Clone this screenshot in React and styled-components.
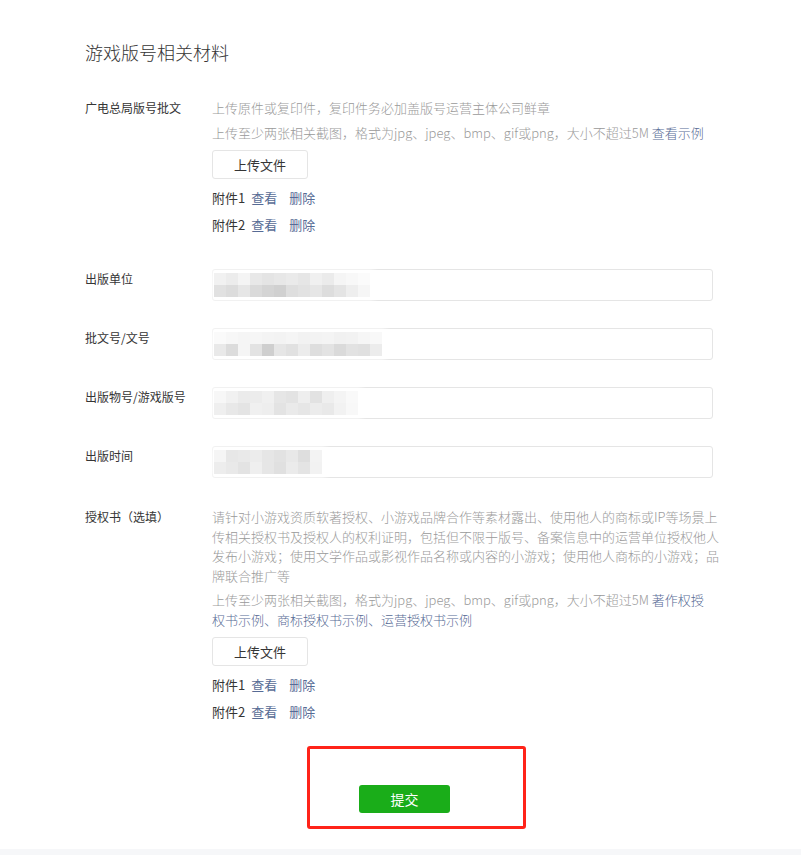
import React from 'react'
import styled, { createGlobalStyle } from 'styled-components'

const GlobalStyle = createGlobalStyle`
  body {
    margin: 0;
    background: #f6f7f9;
    font-family: "Noto Sans CJK SC", "Microsoft YaHei", sans-serif;
    font-weight: 300;
  }
`

const Card = styled.div`
  background: #fff;
  padding: 39px 0 36px 85px;
`

const Title = styled.h2`
  margin: 0 0 33px;
  font-size: 18px;
  line-height: 26px;
  font-weight: 300;
  color: #353535;
`

const Row = styled.div`
  display: flex;
  margin-top: ${p => p.$gap || 0}px;
`

const Label = styled.div`
  width: 127px;
  flex-shrink: 0;
  font-size: 12px;
  line-height: 19.5px;
  font-weight: 400;
  color: #353535;
`

const Content = styled.div`
  width: 508px;
  display: flex;
  flex-direction: column;
  align-items: flex-start;
`

const DescGroup = styled.div`
  display: flex;
  flex-direction: column;
  gap: 5px;
`

const Desc = styled.p`
  margin: 0;
  font-size: 13px;
  line-height: 19.5px;
  color: #9a9a9a;
  white-space: nowrap;
`

const Link = styled.a`
  color: #576b95;
  text-decoration: none;
  cursor: pointer;
  margin-left: ${p => p.$space || 0}px;
`

const UploadButton = styled.button`
  margin-top: 8px;
  width: 96px;
  height: 29px;
  padding: 0;
  border: 1px solid #e5e5e5;
  border-radius: 3px;
  background: #fff;
  font-family: inherit;
  font-weight: 400;
  font-size: 13px;
  color: #353535;
  cursor: pointer;
`

const Attachment = styled.div`
  margin-top: ${p => (p.$first ? 9 : 7)}px;
  font-size: 13px;
  line-height: 20px;
  font-weight: 400;
  color: #353535;
`

const FieldBox = styled.div`
  width: 501px;
  height: 32px;
  box-sizing: border-box;
  border: 1px solid #e5e5e5;
  border-radius: 3px;
  padding-left: 1px;
  display: flex;
  align-items: center;
`

const Mosaic = styled.div`
  display: flex;
  flex-direction: column;
  box-shadow: 0 0 6px 4px rgba(255, 255, 255, 0.85);
`

const MosaicRow = styled.div`
  display: flex;
`

const Cell = styled.span`
  width: 12px;
  height: 12px;
  background: ${p => p.$shade};
`

const Footer = styled.div`
  width: 639px;
  margin-top: 63px;
  display: flex;
  justify-content: center;
`

const SubmitWrap = styled.div`
  position: relative;
`

const SubmitButton = styled.button`
  width: 91px;
  height: 28px;
  padding: 0;
  border: none;
  border-radius: 3px;
  background: #1aad19;
  color: #fff;
  font-family: inherit;
  font-weight: 400;
  font-size: 14px;
  cursor: pointer;
`

const Annotation = styled.div`
  position: absolute;
  left: -52px;
  top: -39px;
  width: 219px;
  height: 83px;
  box-sizing: border-box;
  border: 3px solid #ff2319;
  border-radius: 3px;
  pointer-events: none;
`

const fields = [
  {
    label: '出版单位',
    gap: 34,
    mosaic: [
      ['#f1f1f1', '#ececec', '#f4f4f4', '#e8e8e8', '#e4e4e4', '#e7e7e7', '#eaeaea', '#e6e6e6', '#f0f0f0', '#ebebeb', '#f5f5f5', '#f8f8f8', '#fbfbfb'],
      ['#e1e1e1', '#dcdcdc', '#e6e6e6', '#dadada', '#d4d4d4', '#d0d0d0', '#dedede', '#e2e2e2', '#e6e6e6', '#dddddd', '#e4e4e4', '#eeeeee', '#f6f6f6'],
    ],
  },
  {
    label: '批文号/文号',
    gap: 27,
    mosaic: [
      ['#fafafa', '#f7f7f7', '#f5f5f5', '#f6f6f6', '#f4f4f4', '#f3f3f3', '#f5f5f5', '#f2f2f2', '#f3f3f3', '#f4f4f4', '#f1f1f1', '#f2f2f2', '#f6f6f6', '#f8f8f8'],
      ['#e9e9e9', '#dcdcdc', '#f5f5f5', '#e3e3e3', '#cfcfcf', '#e6e6e6', '#e1e1e1', '#ececec', '#dedede', '#e3e3e3', '#dadada', '#e2e2e2', '#e0e0e0', '#ececec'],
    ],
  },
  {
    label: '出版物号/游戏版号',
    gap: 27,
    mosaic: [
      ['#f7f7f7', '#f1f1f1', '#ebebeb', '#ececec', '#f0f0f0', '#e6e6e6', '#e3e3e3', '#eeeeee', '#e2e2e2', '#efefef', '#f4f4f4', '#f9f9f9'],
      ['#efefef', '#e8e8e8', '#e4e4e4', '#f0f0f0', '#eeeeee', '#e3e3e3', '#eaeaea', '#e6e6e6', '#ececec', '#e9e9e9', '#f2f2f2', '#f8f8f8'],
    ],
  },
  {
    label: '出版时间',
    gap: 27,
    mosaic: [
      ['#f5f5f5', '#e7e7e7', '#e9e9e9', '#ececec', '#e6e6e6', '#e2e2e2', '#e8e8e8', '#dedede', '#f3f3f3'],
      ['#ededed', '#e9e9e9', '#e3e3e3', '#efefef', '#e6e6e6', '#e0e0e0', '#ebebeb', '#e4e4e4', '#f2f2f2'],
    ],
  },
]

const Attachments = () => (
  <>
    <UploadButton>上传文件</UploadButton>
    {[1, 2].map(n => (
      <Attachment key={n} $first={n === 1}>
        附件{n}<Link $space={6}>查看</Link><Link $space={12}>删除</Link>
      </Attachment>
    ))}
  </>
)

const App = () => {
  return (
    <Card>
      <GlobalStyle />
      <Title>游戏版号相关材料</Title>

      <Row>
        <Label>广电总局版号批文</Label>
        <Content>
          <DescGroup>
            <Desc>上传原件或复印件，复印件务必加盖版号运营主体公司鲜章</Desc>
            <Desc>
              上传至少两张相关截图，格式为jpg、jpeg、bmp、gif或png，大小不超过5M <Link>查看示例</Link>
            </Desc>
          </DescGroup>
          <Attachments />
        </Content>
      </Row>

      {fields.map(f => (
        <Row key={f.label} $gap={f.gap}>
          <Label>{f.label}</Label>
          <FieldBox>
            <Mosaic>
              {f.mosaic.map((row, i) => (
                <MosaicRow key={i}>
                  {row.map((shade, j) => <Cell key={j} $shade={shade} />)}
                </MosaicRow>
              ))}
            </Mosaic>
          </FieldBox>
        </Row>
      ))}

      <Row $gap={29}>
        <Label>授权书（选填）</Label>
        <Content>
          <DescGroup>
            <Desc>
              请针对小游戏资质软著授权、小游戏品牌合作等素材露出、使用他人的商标或IP等场景上<br />
              传相关授权书及授权人的权利证明，包括但不限于版号、备案信息中的运营单位授权他人<br />
              发布小游戏；使用文学作品或影视作品名称或内容的小游戏；使用他人商标的小游戏；品<br />
              牌联合推广等
            </Desc>
            <Desc>
              上传至少两张相关截图，格式为jpg、jpeg、bmp、gif或png，大小不超过5M <Link>著作权授</Link><br />
              <Link>权书示例、商标授权书示例、运营授权书示例</Link>
            </Desc>
          </DescGroup>
          <Attachments />
        </Content>
      </Row>

      <Footer>
        <SubmitWrap>
          <SubmitButton>提交</SubmitButton>
          <Annotation />
        </SubmitWrap>
      </Footer>
    </Card>
  )
}

export default App
